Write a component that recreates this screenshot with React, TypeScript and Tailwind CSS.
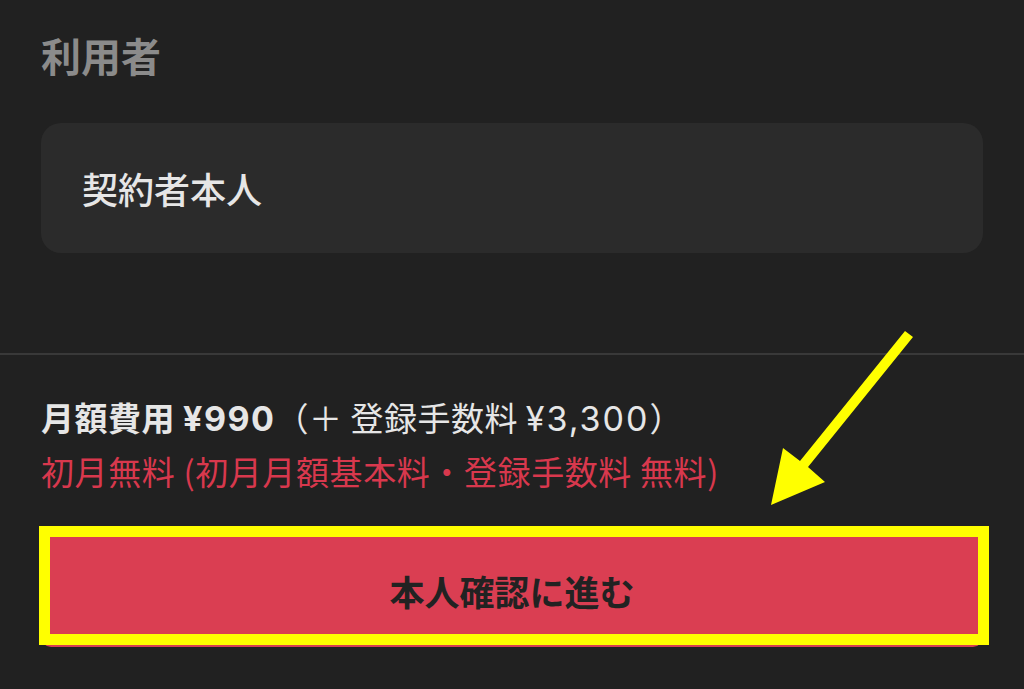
import React from "react";

const jp = { fontFamily: '"Noto Sans CJK JP", "Noto Sans", sans-serif' };
const num = { fontFamily: 'Inter, "Noto Sans CJK JP", sans-serif' };

export default function App() {
  return (
    <div className="relative w-[1024px] h-[689px] overflow-hidden bg-[#212121]" style={jp}>
      <div className="px-[41px] pt-[31px]">
        <h2 className="text-[40px] leading-[48px] font-semibold text-[#8b8b8b]">利用者</h2>
        <div className="mt-[44px] h-[130px] rounded-[20px] bg-[#2b2b2b] flex items-center pl-[41px]">
          <span className="text-[36px] leading-[44px] font-medium text-[#e6e6e6]">契約者本人</span>
        </div>
      </div>

      <div className="mt-[100px] h-[2px] bg-[#393939]" />

      <div className="px-[41px] pt-[36px]">
        <p className="text-[33px] leading-[52px] tracking-[0.5px] text-[#e6e6e6] whitespace-nowrap">
          <span className="font-semibold">月額費用 </span>
          <span className="font-bold text-[34px] tracking-[1.5px]" style={num}>¥990</span>
          <span>（＋ 登録手数料 </span>
          <span className="text-[34px] tracking-[2px]" style={num}>¥3,300</span>
          <span>）</span>
        </p>
        <p className="text-[33px] leading-[52px] tracking-[0.6px] text-[#d8384d] whitespace-nowrap">
          初月無料 (初月月額基本料・登録手数料 無料)
        </p>

        <div className="relative mt-[30px]">
          <button className="w-full h-[120px] rounded-[10px] bg-[#da3e52] flex items-center justify-center pt-[8px]">
            <span className="text-[35px] leading-[44px] font-bold text-[#222222]">本人確認に進む</span>
          </button>
          <div className="absolute left-[-2px] top-[-1px] right-[-6px] bottom-[2px] border-[11px] border-[#ffff00] pointer-events-none" />
        </div>
      </div>

      <svg className="absolute inset-0 pointer-events-none" width="1024" height="689" viewBox="0 0 1024 689">
        <polygon
          points="905,331 800,461 783,448 771,505 825,482 808,467 913,337"
          fill="#ffff00"
        />
      </svg>
    </div>
  );
}
